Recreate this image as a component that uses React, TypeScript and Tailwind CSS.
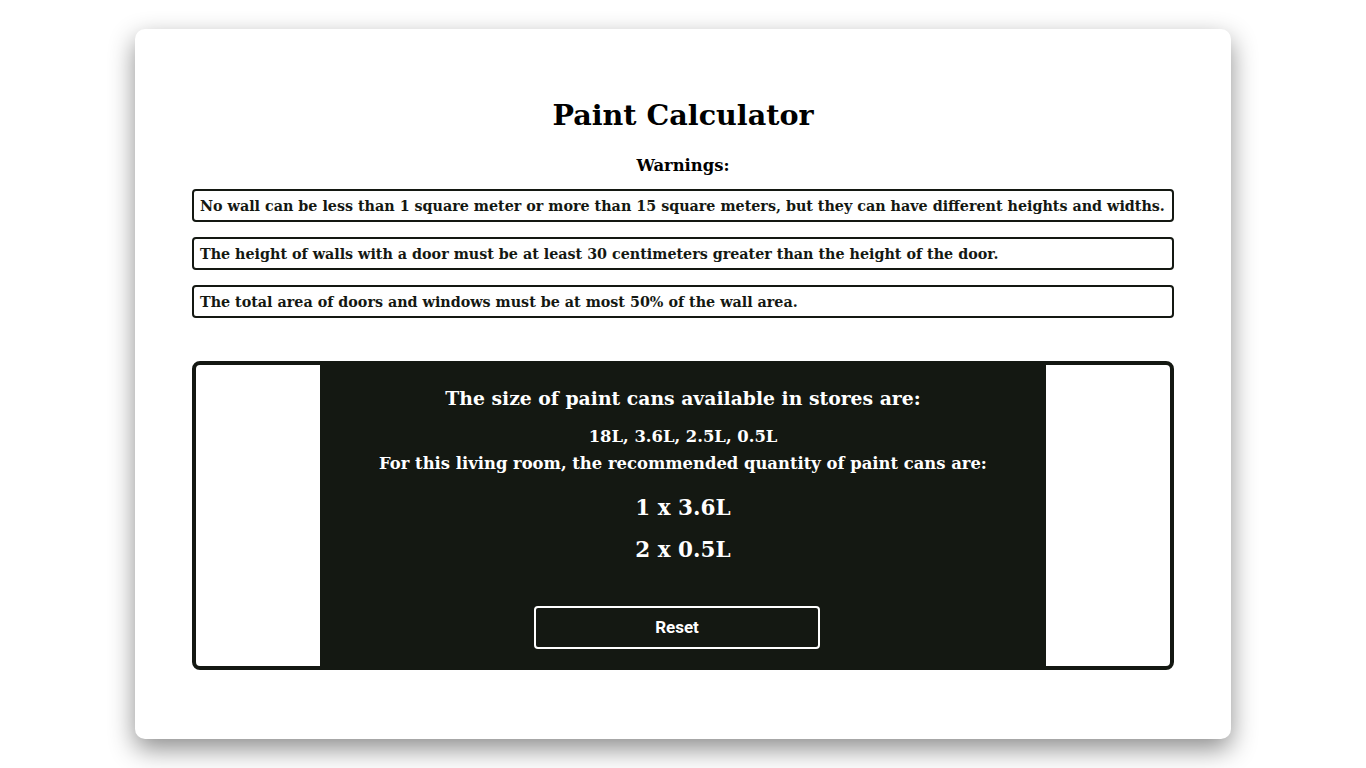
const warnings = [
  "No wall can be less than 1 square meter or more than 15 square meters, but they can have different heights and widths.",
  "The height of walls with a door must be at least 30 centimeters greater than the height of the door.",
  "The total area of doors and windows must be at most 50% of the wall area.",
];

const result = ["1 x 3.6L", "2 x 0.5L"];

export default function App() {
  return (
    <div className="min-h-screen bg-white pt-[29px] font-['DejaVu_Serif',serif] text-black">
      <div className="mx-auto flex h-[710px] w-[1096px] flex-col items-center rounded-[10px] bg-white px-[57px] pt-[69px] shadow-[0_10px_26px_rgba(0,0,0,0.45)]">
        <h1 className="text-[28.6px] font-bold leading-[34px]">Paint Calculator</h1>
        <h3 className="mt-[23px] text-[16.4px] font-bold leading-[22px]">Warnings:</h3>

        <div className="mt-[12px] flex w-full flex-col gap-[15px]">
          {warnings.map((text) => (
            <div
              key={text}
              className="flex h-[33px] items-center rounded-[4px] border-2 border-[#141812] px-[6px] pt-[2px] text-[14.3px] font-bold text-[#141812]"
            >
              {text}
            </div>
          ))}
        </div>

        <div className="mt-[43px] flex h-[309px] w-full justify-center rounded-[8px] border-4 border-[#141812]">
          <div className="flex w-[726px] flex-col items-center bg-[#141812] pt-[20px] text-white">
            <h3 className="text-[18.8px] font-bold leading-[26px]">
              The size of paint cans available in stores are:
            </h3>
            <p className="mt-[14px] text-[16.4px] font-bold leading-[24px]">18L, 3.6L, 2.5L, 0.5L</p>
            <p className="mt-[3px] text-[16.4px] font-bold leading-[24px]">
              For this living room, the recommended quantity of paint cans are:
            </p>
            <div className="mt-[17px] flex flex-col items-center gap-[12px]">
              {result.map((r) => (
                <span key={r} className="text-[21.5px] font-bold leading-[30px]">
                  {r}
                </span>
              ))}
            </div>
            <button className="mr-[12px] mt-[41px] h-[43px] w-[286px] rounded-[4px] border-2 border-white font-['Roboto',sans-serif] text-[17px] font-bold text-white">
              Reset
            </button>
          </div>
        </div>
      </div>
    </div>
  );
}
